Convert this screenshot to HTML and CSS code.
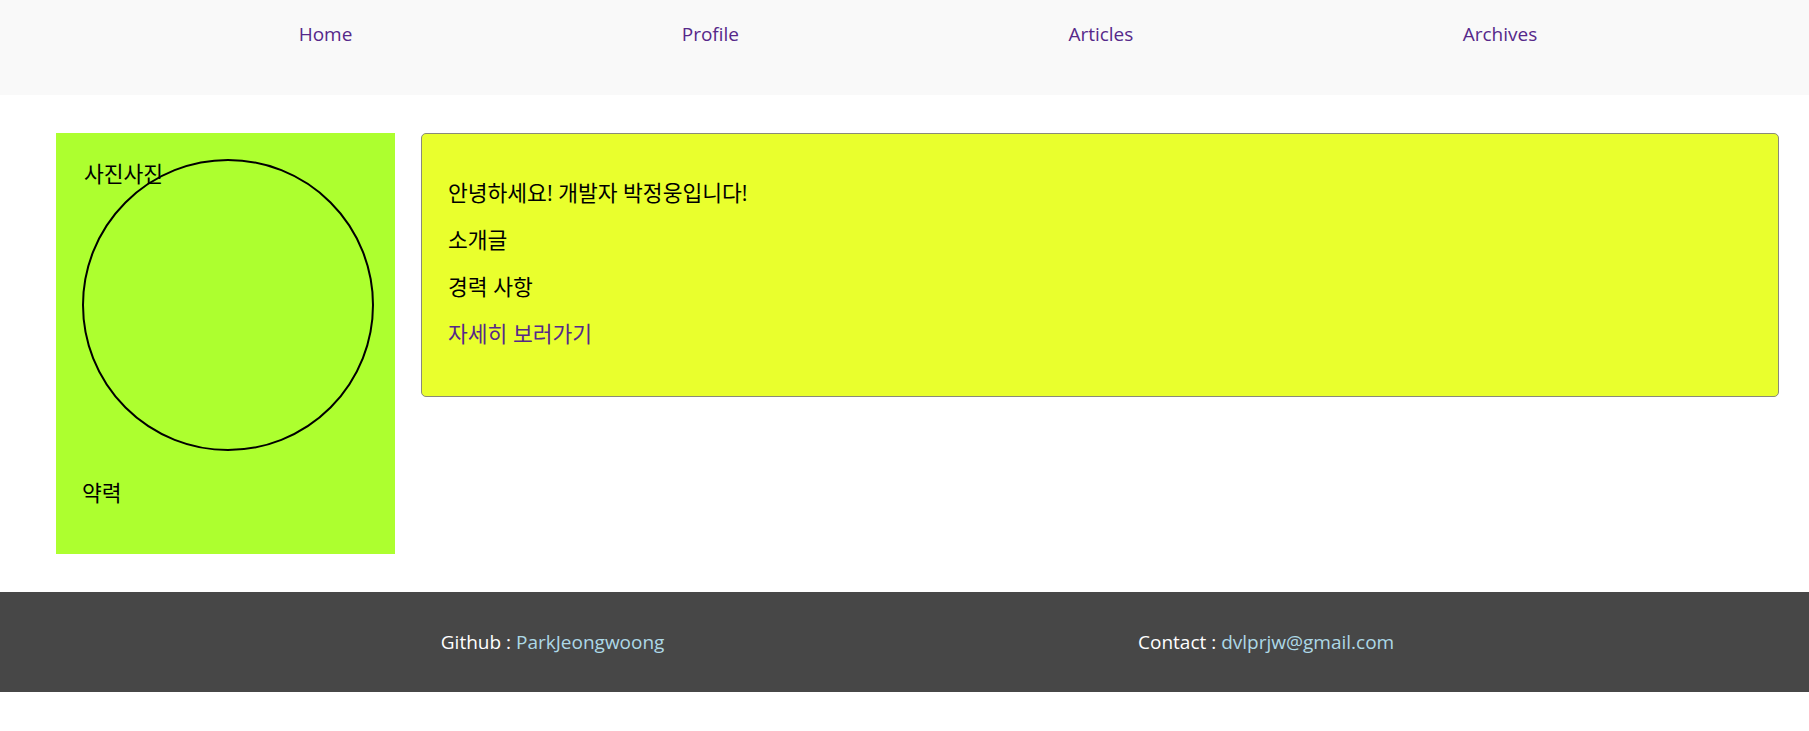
FILE: index.html
```html
<!DOCTYPE html>
<html lang="ko">
<head>
<meta charset="utf-8">
<title>Profile</title>
<link rel="stylesheet" href="styles.css">
</head>
<body>
<header class="site-header">
  <nav class="nav">
    <a class="nav-link" href="#">Home</a>
    <a class="nav-link" href="#">Profile</a>
    <a class="nav-link" href="#">Articles</a>
    <a class="nav-link" href="#">Archives</a>
  </nav>
</header>
<main class="main">
  <aside class="side">
    <div class="photo">
      <span class="photo-label">사진사진</span>
      <div class="photo-circle"></div>
    </div>
    <p class="side-bio">약력</p>
  </aside>
  <section class="card">
    <p class="card-line">안녕하세요! 개발자 박정웅입니다!</p>
    <p class="card-line">소개글</p>
    <p class="card-line">경력 사항</p>
    <p class="card-line"><a class="card-link" href="#">자세히 보러가기</a></p>
  </section>
</main>
<footer class="site-footer">
  <div class="footer-item">Github : <a class="footer-link" href="#">ParkJeongwoong</a></div>
  <div class="footer-item">Contact : <a class="footer-link" href="#">dvlprjw@gmail.com</a></div>
</footer>
</body>
</html>
```
FILE: styles.css
```css
html, body {
  margin: 0;
  padding: 0;
  background: #ffffff;
}
body {
  font-family: "Open Sans", "Noto Sans CJK KR", sans-serif;
  color: #000;
}
.site-header {
  background: #f9f9f9;
  height: 95px;
}
.nav {
  display: flex;
  justify-content: space-around;
  padding: 20px 107px 0 134px;
  line-height: 28px;
}
.nav-link {
  color: #56288a;
  text-decoration: none;
  font-size: 19px;
}
.main {
  display: flex;
  align-items: flex-start;
  gap: 26px;
  padding: 38px 30px 38px 56px;
}
.side {
  width: 339px;
  height: 421px;
  flex: none;
  background: #adff2f;
  box-sizing: border-box;
  padding: 26px 0 0 26px;
  font-family: "Open Sans", "Noto Sans CJK KR", sans-serif;
  font-size: 21.5px;
}
.photo {
  position: relative;
  height: 292px;
}
.photo-label {
  display: block;
  padding: 3px 0 0 2px;
  line-height: 24px;
}
.photo-circle {
  position: absolute;
  left: 0;
  top: 0;
  width: 292px;
  height: 292px;
  box-sizing: border-box;
  border: 2px solid #000;
  border-radius: 50%;
}
.side-bio {
  margin: 30px 0 0;
  line-height: 24px;
}
.card {
  flex: 1;
  background: #e9ff2d;
  border: 1px solid #8a8a7a;
  border-radius: 5px;
  padding: 26px 26px 30px;
  font-family: "Open Sans", "Noto Sans CJK KR", sans-serif;
  font-size: 21.5px;
}
.card-line {
  margin: 18px 0;
  line-height: 29px;
}
.card-link {
  color: #56288a;
  text-decoration: none;
}
.site-footer {
  background: #474747;
  height: 100px;
  display: flex;
  align-items: center;
  justify-content: space-around;
  padding: 0 178px 0 204px;
  color: #ffffff;
  font-size: 19px;
}
.footer-link {
  color: #add8e6;
  text-decoration: none;
}
```
